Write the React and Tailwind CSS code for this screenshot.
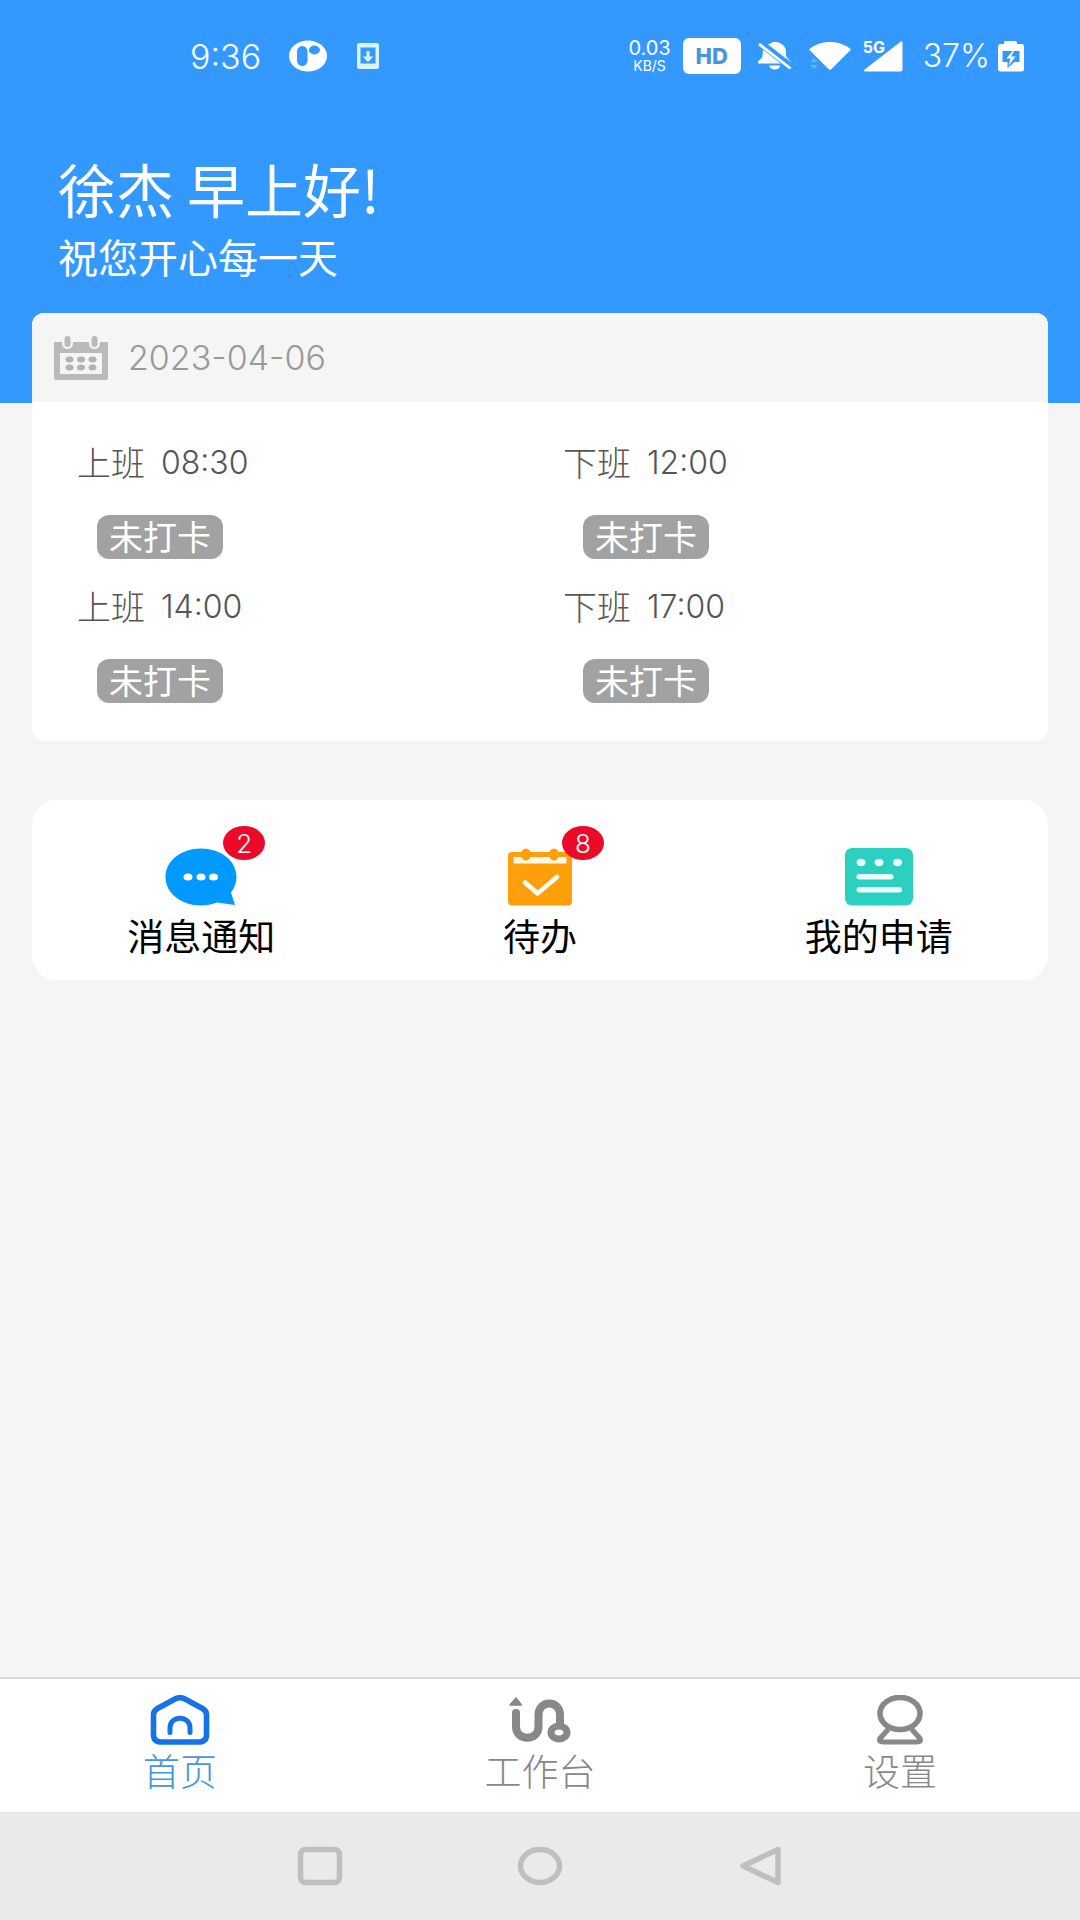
import React from "react";

function AppLogo() {
  return (
    <svg width="38" height="32" viewBox="0 0 38 32" aria-hidden="true">
      <ellipse cx="19" cy="16" rx="19" ry="15.5" fill="#fff" />
      <rect x="8" y="6" width="10.5" height="20" rx="5.2" fill="#3399ff" />
      <ellipse cx="25.4" cy="10" rx="5.6" ry="4.4" fill="#3399ff" />
    </svg>
  );
}

function DownloadIcon() {
  return (
    <svg width="22" height="26" viewBox="0 0 22 26" aria-hidden="true">
      <path
        fillRule="evenodd"
        fill="#d9f3ff"
        d="M2 0h18a2 2 0 0 1 2 2v22a2 2 0 0 1-2 2H2a2 2 0 0 1-2-2V2a2 2 0 0 1 2-2zM3.500 4.500v16h15v-16z"
      />
      <path d="M9.500 8h3v5.500h4L11 19l-5.500-5.500h4z" fill="#d9f3ff" />
    </svg>
  );
}

function MutedBellIcon() {
  return (
    <svg width="36" height="30" viewBox="0 0 36 30" aria-hidden="true">
      <path d="M11 3.500C13.500 2.500 15 2 15.500 1h4C25 2 29 5.500 29 11v6.500z" fill="#fff" />
      <path d="M6 8.500L23.500 22.500H1v-2l4.500-4.500z" fill="#fff" />
      <path d="M12 24.500h11.500c-1 2.500-3 4-5.700 4s-4.800-1.500-5.800-4z" fill="#fff" />
      <path d="M29 15v2l5.500 5z" fill="#fff" />
      <path d="M2 3L33.500 27.500" stroke="#fff" strokeWidth="2.800" />
    </svg>
  );
}

function WifiIcon() {
  return (
    <svg width="42" height="30" viewBox="0 0 42 30" aria-hidden="true">
      <path d="M0 8.500C11-1.500 31-1.500 42 8.500L22.500 28q-1.500 1.500-3 0z" fill="#fff" />
      <path d="M1 21l4-4 4 4zM1 24h8l-4 4z" fill="#66b3ff" />
    </svg>
  );
}

function BatteryIcon() {
  return (
    <svg width="26" height="31" viewBox="0 0 26 31" aria-hidden="true">
      <path
        fillRule="evenodd"
        fill="#fff"
        d="M7.500 0h10q1.500 0 1.500 1.500V3h4.500Q26 3 26 5.500v23q0 2-2.500 2h-21Q0 30.500 0 28.500v-23Q0 3 2.500 3H6V1.500Q6 0 7.500 0zM4.500 10v11h5v6l7-6h5V10z"
      />
      <path d="M14.500 10L8.500 17.500h4L10.500 25l7-9.500h-4.500l3-5.500z" fill="#fff" />
    </svg>
  );
}

function StatusBar() {
  return (
    <div className="flex h-28 items-center justify-between pr-14 pl-[190px] font-light">
      <div className="flex items-center">
        <span className="mr-7 text-[34px]">9:36</span>
        <AppLogo />
        <span className="ml-[30px]">
          <DownloadIcon />
        </span>
      </div>
      <div className="flex items-center">
        <div className="mr-3 flex flex-col items-center font-normal">
          <span className="text-[20px] leading-5">0.03</span>
          <span className="text-[14px] leading-4">KB/S</span>
        </div>
        <span className="mr-4 flex h-9 w-[58px] items-center justify-center rounded-md bg-white text-[22px] font-extrabold text-[#4a94dc]">
          HD
        </span>
        <MutedBellIcon />
        <span className="ml-4">
          <WifiIcon />
        </span>
        <span className="relative mr-5 ml-3">
          <svg width="40" height="31" viewBox="0 0 40 31" aria-hidden="true">
            <path d="M37.500 .8Q39.500-.5 39.500 2v26.500q0 2-2 2H3q-3.500 0-1-2.200z" fill="#fff" />
          </svg>
          <span className="absolute top-0 left-0 text-[16px] leading-3 font-bold">5G</span>
        </span>
        <span className="mr-2 text-[32px]">37%</span>
        <BatteryIcon />
      </div>
    </div>
  );
}

function CalendarIcon() {
  return (
    <svg width="54" height="44" viewBox="0 0 54 44" aria-hidden="true">
      <path
        fillRule="evenodd"
        fill="#bababa"
        d="M1 6h52q1 0 1 1v35q0 2-2 2H2q-2 0-2-2V7q0-1 1-1zM6 17v21h42V17z"
      />
      <g stroke="#f5f5f5" strokeWidth="11" strokeLinecap="round">
        <path d="M13.500 4v3.500M40.500 4v3.500" />
      </g>
      <g stroke="#bababa" strokeWidth="6" strokeLinecap="round">
        <path d="M13.500 3v5M40.500 3v5" />
      </g>
      <g fill="#b2b2b2">
        {[15.5, 27, 38.5].map((x) => (
          <React.Fragment key={x}>
            <ellipse cx={x} cy="23.500" rx="4" ry="3" />
            <ellipse cx={x} cy="31.500" rx="4" ry="3" />
          </React.Fragment>
        ))}
      </g>
    </svg>
  );
}

const punches = [
  { id: 1, label: "上班", time: "08:30" },
  { id: 2, label: "下班", time: "12:00" },
  { id: 3, label: "上班", time: "14:00" },
  { id: 4, label: "下班", time: "17:00" },
];

function Punch({ label, time }) {
  return (
    <div className="pl-[45px]">
      <div className="flex h-12 items-center gap-4 text-[#555]">
        <span className="text-[34px]">{label}</span>
        <span className="text-[32px]">{time}</span>
      </div>
      <button
        type="button"
        className="mt-7 ml-5 flex h-11 items-center rounded-xl bg-[#a2a2a2] px-3 text-[34px] font-normal text-white"
      >
        未打卡
      </button>
    </div>
  );
}

function MessageIcon() {
  return (
    <svg width="72" height="58" viewBox="0 0 72 58" aria-hidden="true">
      <path
        d="M36 .5C55 .5 71.500 12 71.500 29c0 6-2 11-5.500 15.500L70 57l-18-2.500C47 56.500 41.500 57.500 36 57.500 16 57.500 .5 45 .5 29S16 .5 36 .5z"
        fill="#0099ff"
      />
      <g fill="#fff">
        <ellipse cx="23" cy="29" rx="4.500" ry="3.600" />
        <ellipse cx="36" cy="29" rx="4.500" ry="3.600" />
        <ellipse cx="48.500" cy="29" rx="4.500" ry="3.600" />
      </g>
    </svg>
  );
}

function TodoIcon() {
  return (
    <svg width="64" height="58" viewBox="0 0 64 58" aria-hidden="true">
      <rect y="4" width="64" height="53.500" rx="4" fill="#ffa00a" />
      <rect x="5.500" y="9" width="53" height="6.500" fill="#fff8e8" />
      <g fill="#ffa00a">
        <ellipse cx="18" cy="6.500" rx="5" ry="6" />
        <ellipse cx="46" cy="6.500" rx="5" ry="6" />
      </g>
      <path
        d="M17 34.500l12.500 11L49 29"
        fill="none"
        stroke="#fff"
        strokeWidth="4.500"
        strokeLinecap="round"
        strokeLinejoin="round"
      />
    </svg>
  );
}

function ApplyIcon() {
  return (
    <svg width="68" height="58" viewBox="0 0 68 58" aria-hidden="true">
      <rect width="68" height="57.500" rx="7" fill="#2bd0c1" />
      <g fill="#eafffc">
        <ellipse cx="16" cy="14.500" rx="4.500" ry="3.800" />
        <ellipse cx="34" cy="14.500" rx="4.500" ry="3.800" />
        <ellipse cx="52.500" cy="14.500" rx="4.500" ry="3.800" />
        <rect x="11.500" y="26" width="37" height="5.500" rx="2.700" />
        <rect x="11.500" y="39" width="45.500" height="5.500" rx="2.700" />
      </g>
    </svg>
  );
}

const shortcuts = [
  { name: "消息通知", Icon: MessageIcon, count: 2 },
  { name: "待办", Icon: TodoIcon, count: 8 },
  { name: "我的申请", Icon: ApplyIcon },
];

function HomeIcon() {
  return (
    <svg width="60" height="50" viewBox="0 0 60 50" fill="none" stroke="#1473e6" aria-hidden="true">
      <path
        d="M25.500 3.800Q30 1.500 34.500 3.800L52.500 13.500Q56.500 15.800 56.500 19.500V40Q56.500 47 48 47H12Q3.500 47 3.500 40V19.500Q3.500 15.800 7.500 13.500z"
        strokeWidth="5.600"
      />
      <path d="M20 37.500V33C20 20 40 20 40 33V37.500" strokeWidth="5" strokeLinecap="round" />
    </svg>
  );
}

function WorkbenchIcon() {
  return (
    <svg width="62" height="46" viewBox="0 0 62 46" fill="none" stroke="#888" aria-hidden="true">
      <path d="M7 1L12.500 8H1z" fill="#888" stroke="#888" strokeWidth="1.500" strokeLinejoin="round" />
      <path
        d="M7 16V29.500C7 44.500 29.500 44.500 29.500 29.500V18C29.500 2.500 51 2.500 51 18V28"
        strokeWidth="8"
      />
      <circle cx="7" cy="16" r="4" fill="#888" stroke="none" />
      <ellipse cx="50" cy="35.500" rx="8" ry="6.600" strokeWidth="7" />
    </svg>
  );
}

function SettingsIcon() {
  return (
    <svg width="48" height="50" viewBox="0 0 48 50" fill="none" stroke="#888" aria-hidden="true">
      <ellipse cx="24" cy="18.500" rx="20" ry="16" strokeWidth="5.600" />
      <path
        d="M12.500 34L4 43.500Q2.500 47 7 47H41Q45.500 47 44 43.500L35.500 34"
        strokeWidth="5.200"
        strokeLinejoin="round"
      />
    </svg>
  );
}

const tabs = [
  { name: "首页", Icon: HomeIcon, active: true },
  { name: "工作台", Icon: WorkbenchIcon },
  { name: "设置", Icon: SettingsIcon },
];

export default function App() {
  return (
    <div className="flex min-h-screen flex-col bg-[#f5f5f5] font-['Inter','Noto_Sans_CJK_SC',sans-serif] font-light">
      <header className="bg-[#3399ff] pb-[90px] text-white">
        <StatusBar />
        <div className="px-[58px] pt-9 pb-[29px] font-['Noto_Sans_CJK_SC',sans-serif] font-normal">
          <h1 className="text-[58px] leading-20">徐杰 早上好!</h1>
          <p className="text-[40px] leading-14">祝您开心每一天</p>
        </div>
      </header>

      <main className="-mt-[90px] flex-1 px-8">
        <section className="overflow-hidden rounded-xl bg-white">
          <div className="flex h-[89px] items-center gap-5 bg-[#f5f5f5] pl-[22px]">
            <CalendarIcon />
            <time className="text-[34px] text-[#999]">2023-04-06</time>
          </div>
          <div className="grid grid-cols-[486px_1fr] gap-y-6 pt-[37px] pb-[38px]">
            {punches.map((p) => (
              <Punch key={p.id} label={p.label} time={p.time} />
            ))}
          </div>
        </section>

        <section className="mt-[59px] grid h-[180px] grid-cols-3 rounded-3xl bg-white">
          {shortcuts.map(({ name, Icon, count }) => (
            <button key={name} type="button" className="flex flex-col items-center pt-12 font-normal text-black">
              <span className="relative">
                <Icon />
                {count && (
                  <span className="absolute -top-[22px] left-[calc(50%+22px)] flex h-[34px] w-[42px] items-center justify-center rounded-[50%] bg-[#eb0a28] text-[26px] font-light text-white">
                    {count}
                  </span>
                )}
              </span>
              <span className="mt-2 text-[37px] leading-12">{name}</span>
            </button>
          ))}
        </section>
      </main>

      <nav className="grid h-[135px] grid-cols-3 border-t-2 border-[#dcdcdc] bg-white">
        {tabs.map(({ name, Icon, active }) => (
          <a
            key={name}
            href="#"
            aria-current={active ? "page" : undefined}
            className={`flex flex-col items-center pt-4 ${active ? "text-[#4595df]" : "text-[#888]"}`}
          >
            <span className="flex h-[50px] items-center">
              <Icon />
            </span>
            <span className="mt-1 text-[37px] leading-12">{name}</span>
          </a>
        ))}
      </nav>

      <div className="flex h-[108px] items-center justify-center gap-[174px] bg-[#eaeaea]">
        <button type="button" aria-label="最近任务">
          <svg width="46" height="40" viewBox="0 0 46 40" fill="none" stroke="#bfbfbf" strokeWidth="5.500">
            <rect x="3.500" y="3.500" width="39" height="33" rx="5" />
          </svg>
        </button>
        <button type="button" aria-label="主屏幕">
          <svg width="46" height="40" viewBox="0 0 46 40" fill="none" stroke="#bfbfbf" strokeWidth="5.500">
            <ellipse cx="23" cy="20" rx="19.500" ry="16.500" />
          </svg>
        </button>
        <button type="button" aria-label="返回">
          <svg width="46" height="40" viewBox="0 0 46 40" fill="none" stroke="#bfbfbf" strokeWidth="5.500" strokeLinejoin="round">
            <path d="M6 20L41 3.500V36.500z" />
          </svg>
        </button>
      </div>
    </div>
  );
}
